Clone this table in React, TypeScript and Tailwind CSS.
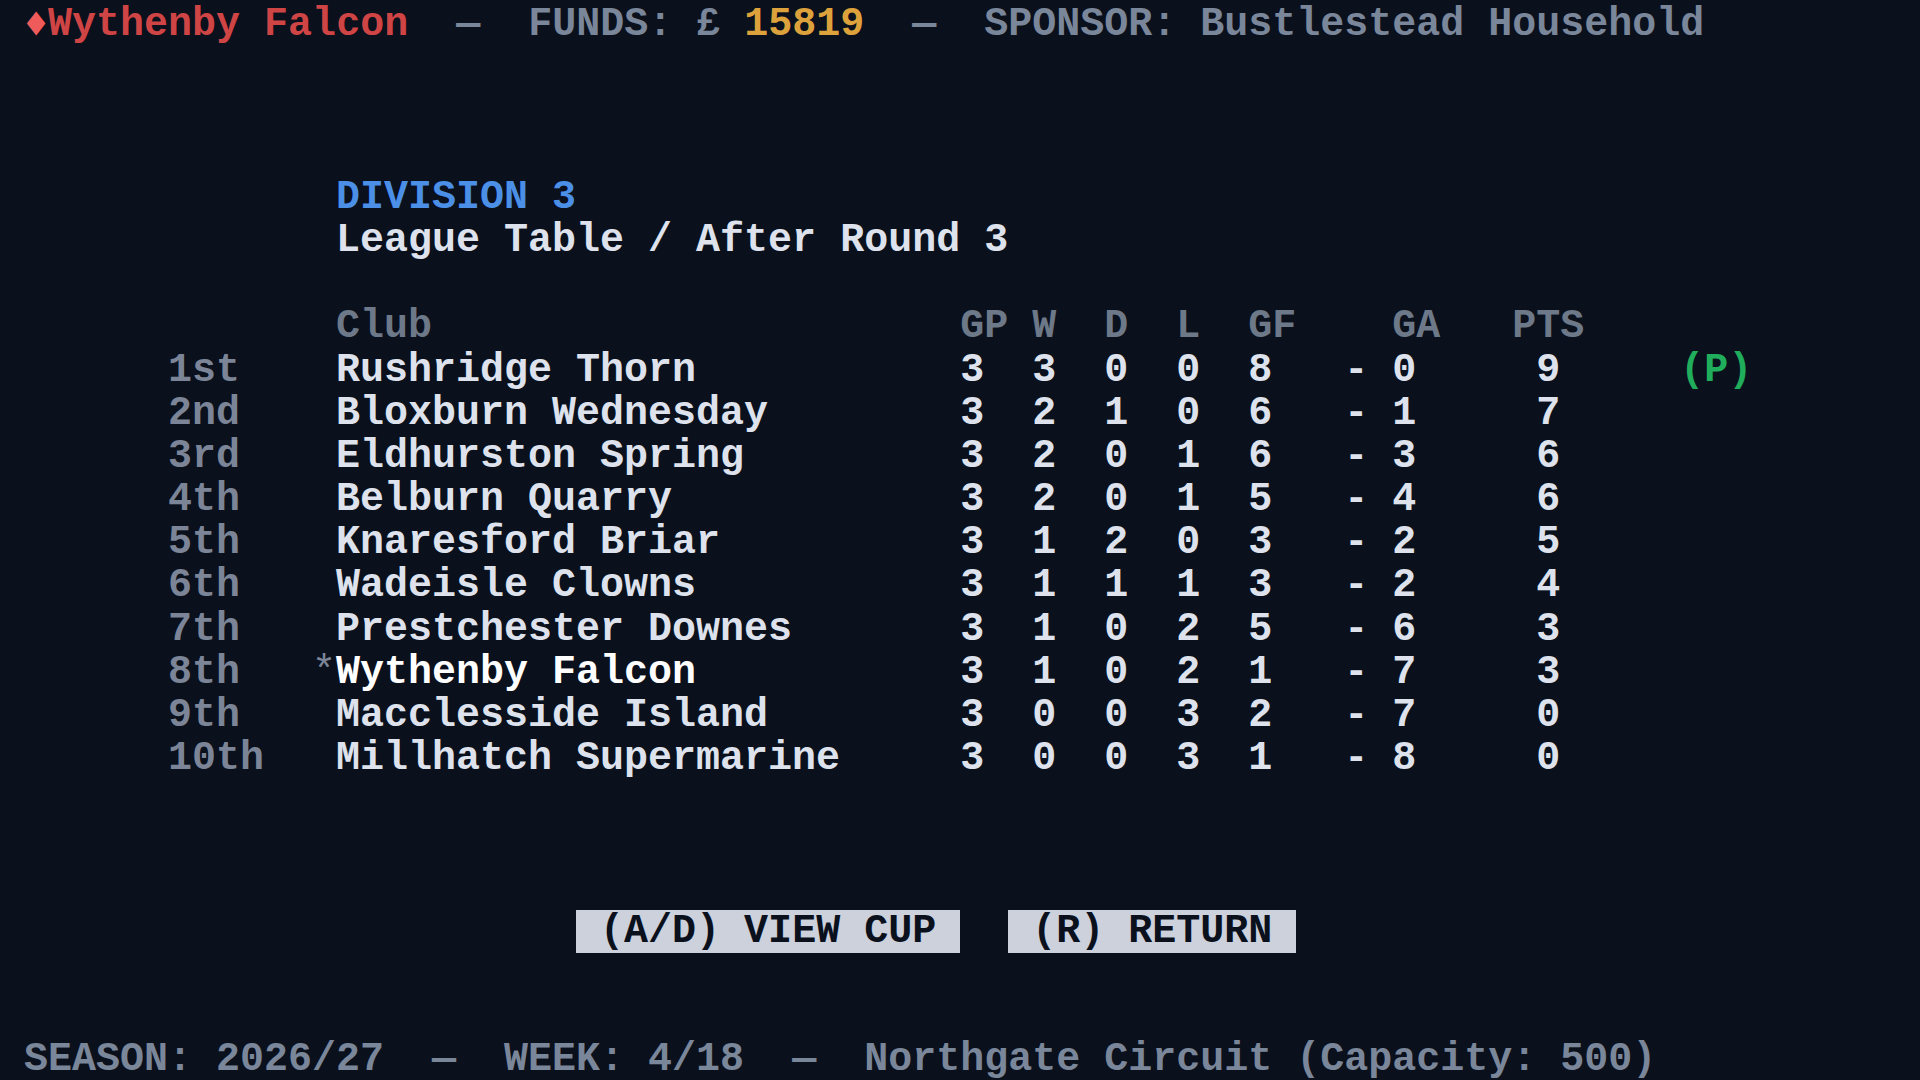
import React from 'react'

const rows = [
  { pos: '1st', club: 'Rushridge Thorn', gp: 3, w: 3, d: 0, l: 0, gf: 8, ga: 0, pts: 9, promo: true },
  { pos: '2nd', club: 'Bloxburn Wednesday', gp: 3, w: 2, d: 1, l: 0, gf: 6, ga: 1, pts: 7 },
  { pos: '3rd', club: 'Eldhurston Spring', gp: 3, w: 2, d: 0, l: 1, gf: 6, ga: 3, pts: 6 },
  { pos: '4th', club: 'Belburn Quarry', gp: 3, w: 2, d: 0, l: 1, gf: 5, ga: 4, pts: 6 },
  { pos: '5th', club: 'Knaresford Briar', gp: 3, w: 1, d: 2, l: 0, gf: 3, ga: 2, pts: 5 },
  { pos: '6th', club: 'Wadeisle Clowns', gp: 3, w: 1, d: 1, l: 1, gf: 3, ga: 2, pts: 4 },
  { pos: '7th', club: 'Prestchester Downes', gp: 3, w: 1, d: 0, l: 2, gf: 5, ga: 6, pts: 3 },
  { pos: '8th', club: 'Wythenby Falcon', gp: 3, w: 1, d: 0, l: 2, gf: 1, ga: 7, pts: 3, mine: true },
  { pos: '9th', club: 'Macclesside Island', gp: 3, w: 0, d: 0, l: 3, gf: 2, ga: 7, pts: 0 },
  { pos: '10th', club: 'Millhatch Supermarine', gp: 3, w: 0, d: 0, l: 3, gf: 1, ga: 8, pts: 0 },
]

// "  —  " separator, 5 cells wide
function Sep() {
  return <span className="w-[5ch] text-center text-[#7a8699]">—</span>
}

export default function App() {
  return (
    <div
      className="w-[1920px] h-[1080px] bg-[#0a101c] pt-[3px] text-[40px] font-bold text-[#dde2ec] flex flex-col overflow-hidden"
      style={{ fontFamily: '"Liberation Mono", "DejaVu Sans Mono", monospace' }}
    >
      {/* top status line */}
      <div className="h-[43.2px] leading-[43.2px] flex pl-[1ch] whitespace-pre">
        <span className="w-[1ch] text-center text-[#ef5a5a]" style={{ fontFamily: '"DejaVu Sans Mono", monospace' }}>♦</span>
        <span className="text-[#cf4444]">Wythenby Falcon</span>
        <Sep />
        <span className="text-[#7a8699]">FUNDS: £ </span>
        <span className="text-[#dda23b]">15819</span>
        <Sep />
        <span className="text-[#7a8699]">SPONSOR: Bustlestead Household</span>
      </div>

      {/* title */}
      <div className="mt-[129.6px] pl-[14ch]">
        <div className="h-[43.2px] leading-[43.2px] text-[#4b8fe6]">DIVISION 3</div>
        <div className="h-[43.2px] leading-[43.2px]">League Table / After Round 3</div>
      </div>

      {/* table */}
      <div className="mt-[43.2px] flex flex-col">
        <div className="h-[43.2px] leading-[43.2px] flex text-[#6d7888]">
          <span className="w-[14ch]" />
          <span className="w-[26ch]">Club</span>
          <span className="w-[3ch]">GP</span>
          <span className="w-[3ch]">W</span>
          <span className="w-[3ch]">D</span>
          <span className="w-[3ch]">L</span>
          <span className="w-[6ch]">GF</span>
          <span className="w-[5ch]">GA</span>
          <span className="w-[7ch]">PTS</span>
        </div>
        {rows.map((r) => (
          <div key={r.pos} className="h-[43.2px] leading-[43.2px] flex">
            <span className="w-[7ch]" />
            <span className="w-[6ch] text-[#7b8597]">{r.pos}</span>
            <span className="w-[1ch] text-[#7b8597] font-normal">{r.mine ? '*' : ''}</span>
            <span className={`w-[26ch] ${r.mine ? 'text-white' : ''}`}>{r.club}</span>
            <span className="w-[3ch]">{r.gp}</span>
            <span className="w-[3ch]">{r.w}</span>
            <span className="w-[3ch]">{r.d}</span>
            <span className="w-[3ch]">{r.l}</span>
            <span className="w-[4ch]">{r.gf}</span>
            <span className="w-[2ch]">-</span>
            <span className="w-[5ch]">{r.ga}</span>
            <span className="w-[7ch] pl-[1ch]">{r.pts}</span>
            {r.promo && <span className="text-[#20ad5c]">(P)</span>}
          </div>
        ))}
      </div>

      {/* actions */}
      <div className="mt-[129.6px] h-[43.2px] leading-[43.2px] flex pl-[24ch] gap-[2ch] whitespace-pre">
        <span className="bg-[#ccd1dc] text-[#0a101c] px-[1ch]">(A/D) VIEW CUP</span>
        <span className="bg-[#ccd1dc] text-[#0a101c] px-[1ch]">(R) RETURN</span>
      </div>

      {/* bottom status line */}
      <div className="mt-[86.4px] h-[40px] leading-[40px] flex pl-[1ch] whitespace-pre text-[#7a8699]">
        <span>SEASON: 2026/27</span>
        <Sep />
        <span>WEEK: 4/18</span>
        <Sep />
        <span>Northgate Circuit (Capacity: 500)</span>
      </div>
    </div>
  )
}
